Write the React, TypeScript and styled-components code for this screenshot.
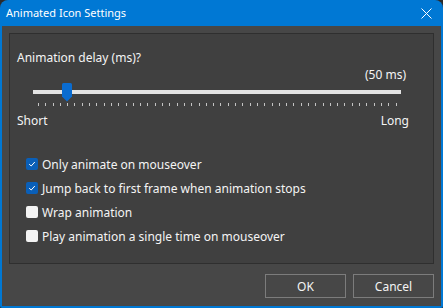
import React from "react";
import styled, { createGlobalStyle } from "styled-components";

const Global = createGlobalStyle`
  html, body { margin: 0; padding: 0; background: #2b2b2b; }
  body { font-family: "Noto Sans", "Open Sans", Arial, sans-serif; }
`;

const Window = styled.div`
  width: 443px;
  height: 308px;
  box-sizing: border-box;
  background: #0078d4;
  border-radius: 8px 8px 2px 2px;
  padding: 0 2px 2px 2px;
  display: flex;
  flex-direction: column;
  overflow: hidden;
`;

const TitleBar = styled.div`
  height: 26px;
  display: flex;
  align-items: center;
  justify-content: space-between;
  padding: 0 9px 0 4px;
  color: #ffffff;
  font-size: 11px;
  flex: none;
`;

const Title = styled.span`
  line-height: 16px;
  margin-top: -1px;
`;

const Body = styled.div`
  flex: 1;
  background: #474747;
  padding: 7px 7px 8px 7px;
  display: flex;
  flex-direction: column;
  color: #f4f4f4;
  font-size: 12px;
`;

const Panel = styled.div`
  height: 231px;
  box-sizing: border-box;
  border: 1px solid #2f2f2f;
  background: #404040;
  padding-top: 16px;
  display: flex;
  flex-direction: column;
`;

const Label = styled.div`
  line-height: 16px;
  padding-left: 7px;
`;

const ValueText = styled.div`
  line-height: 16px;
  margin-top: 1px;
  text-align: right;
  padding-right: 27px;
`;

const TrackArea = styled.div`
  position: relative;
  height: 19px;
  margin: 0 32px 0 23px;
`;

const Track = styled.div`
  position: absolute;
  left: 0;
  right: 0;
  top: 7px;
  height: 4px;
  background: #e3e3e3;
`;

const Thumb = styled.svg`
  position: absolute;
  top: 0;
  width: 10px;
  height: 19px;
`;

const Ticks = styled.div`
  display: flex;
  justify-content: space-between;
  margin: 1px 36px 0 28px;
  height: 4px;
`;

const Tick = styled.span`
  width: 1px;
  height: 3px;
  background: #c4c4c4;
`;

const Ends = styled.div`
  display: flex;
  justify-content: space-between;
  line-height: 16px;
  margin-top: 6px;
  padding: 0 24px 0 7px;
`;

const Options = styled.div`
  margin-top: 23px;
  display: flex;
  flex-direction: column;
`;

const Row = styled.label`
  height: 24px;
  display: flex;
  align-items: center;
  padding-left: 16px;
  gap: 4px;
`;

const Box = styled.span<{ $checked: boolean }>`
  width: 12px;
  height: 12px;
  border-radius: 2px;
  box-sizing: border-box;
  background: ${(p) => (p.$checked ? "#0a5fb8" : "#f3f3f3")};
  display: flex;
  align-items: center;
  justify-content: center;
`;

const Footer = styled.div`
  display: flex;
  justify-content: flex-end;
  gap: 7px;
  margin-top: 10px;
`;

const Button = styled.button`
  width: 81px;
  height: 24px;
  box-sizing: border-box;
  border: 1px solid #7c7c7c;
  background: #474747;
  color: #f4f4f4;
  font-family: inherit;
  font-size: 12px;
  padding: 0;
`;

const options = [
  { label: "Only animate on mouseover", checked: true },
  { label: "Jump back to first frame when animation stops", checked: true },
  { label: "Wrap animation", checked: false },
  { label: "Play animation a single time on mouseover", checked: false },
];

const MIN = 10;
const MAX = 500;
const VALUE = 50;
const TICK_SPAN = 358;

export default function App() {
  const thumbLeft = 5 + ((VALUE - MIN) / (MAX - MIN)) * TICK_SPAN - 5;
  const ticks = Array.from({ length: (MAX - MIN) / 10 + 1 });
  return (
    <>
      <Global />
      <Window>
        <TitleBar>
          <Title>Animated Icon Settings</Title>
          <svg width="11" height="11" viewBox="0 0 11 11">
            <path d="M0.5 0.5 L10.5 10.5 M10.5 0.5 L0.5 10.5" stroke="#ffffff" strokeWidth="1" />
          </svg>
        </TitleBar>
        <Body>
          <Panel>
            <Label>Animation delay (ms)?</Label>
            <ValueText>({VALUE} ms)</ValueText>
            <TrackArea>
              <Track />
              <Thumb viewBox="0 0 10 19" style={{ left: thumbLeft }}>
                <path d="M1.5 0 H8.5 Q10 0 10 1.5 V13.5 L5 18.5 L0 13.5 V1.5 Q0 0 1.5 0 Z" fill="#0a6cd0" />
              </Thumb>
            </TrackArea>
            <Ticks>
              {ticks.map((_, i) => (
                <Tick key={i} />
              ))}
            </Ticks>
            <Ends>
              <span>Short</span>
              <span>Long</span>
            </Ends>
            <Options>
              {options.map((o) => (
                <Row key={o.label}>
                  <Box $checked={o.checked}>
                    {o.checked && (
                      <svg width="8" height="8" viewBox="0 0 8 8">
                        <path d="M1.2 4.2 L3.2 6 L6.8 2" stroke="#ffffff" strokeWidth="1" fill="none" />
                      </svg>
                    )}
                  </Box>
                  <span>{o.label}</span>
                </Row>
              ))}
            </Options>
          </Panel>
          <Footer>
            <Button>OK</Button>
            <Button>Cancel</Button>
          </Footer>
        </Body>
      </Window>
    </>
  );
}
